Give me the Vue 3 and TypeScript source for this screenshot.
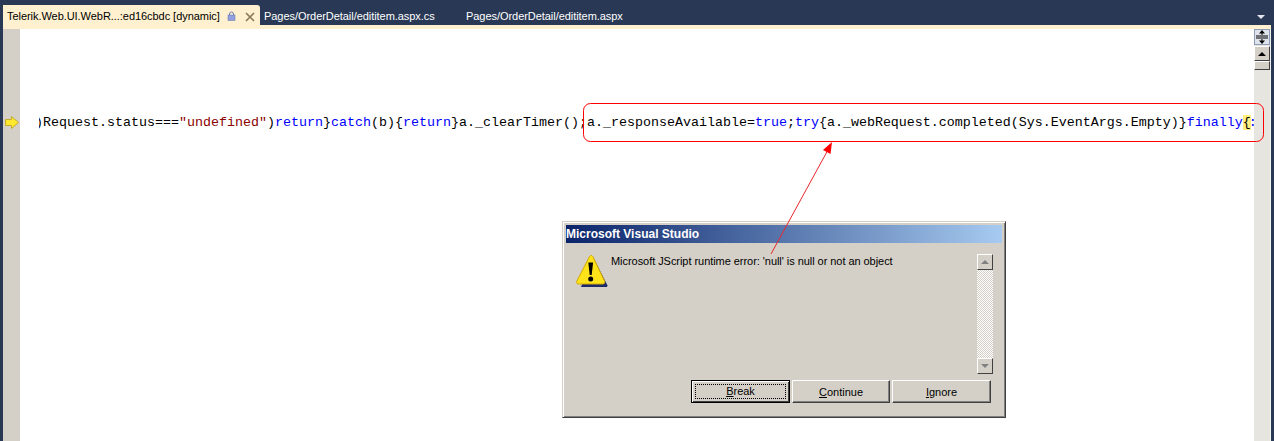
<script setup lang="ts">
interface Token { text: string; kind: 'plain' | 'kw' | 'str' | 'cur' | 'tail' }
const tokens: Token[] = [
  { text: ')Request.status===', kind: 'plain' },
  { text: '"undefined"', kind: 'str' },
  { text: ')', kind: 'plain' },
  { text: 'return', kind: 'kw' },
  { text: '}', kind: 'plain' },
  { text: 'catch', kind: 'kw' },
  { text: '(b){', kind: 'plain' },
  { text: 'return', kind: 'kw' },
  { text: '}a._clearTimer();a._responseAvailable=', kind: 'plain' },
  { text: 'true', kind: 'kw' },
  { text: ';', kind: 'plain' },
  { text: 'try', kind: 'kw' },
  { text: '{a._webRequest.completed(Sys.EventArgs.Empty)}', kind: 'plain' },
  { text: 'finally', kind: 'kw' },
  { text: '{', kind: 'cur' },
  { text: ':', kind: 'tail' },
]
</script>

<template>
  <div class="ide">
    <div class="tabs">
      <div class="tab active">
        <span class="tab-title">Telerik.Web.UI.WebR...:ed16cbdc [dynamic]</span>
        <svg class="lock" width="9" height="10" viewBox="0 0 9 10">
          <path d="M2.500 4.500V3a2 2 0 0 1 4 0v1.500" fill="none" stroke="#6f7fb5" stroke-width="1" />
          <rect x="1" y="4" width="7" height="5.500" fill="#8f9fe0" stroke="#6f7fb5" stroke-width=".6" />
        </svg>
        <svg class="close" width="10" height="10" viewBox="0 0 10 10">
          <path d="M1 1l8 8M9 1l-8 8" stroke="#8a7a5c" stroke-width="1.700" fill="none" />
        </svg>
      </div>
      <div class="tab second">Pages/OrderDetail/edititem.aspx.cs</div>
      <div class="tab third">Pages/OrderDetail/edititem.aspx</div>
      <svg class="menu" width="8" height="4" viewBox="0 0 8 4">
        <path d="M0 0h8L4 4z" fill="#e4e7ef" />
      </svg>
    </div>
    <div class="strip"></div>
    <div class="main">
      <div class="gutter">
        <svg class="pointer" width="14" height="13" viewBox="0 0 14 13">
          <path d="M.5 3.500H6.500V.5L13.500 6.500 6.500 12.500V9.500H.5z" fill="#ffe92e" stroke="#c4ac2a" stroke-width="1" />
        </svg>
      </div>
      <div class="editor">
        <div class="code"><span
          v-for="(t, i) in tokens"
          :key="i"
          :class="t.kind"
        >{{ t.text }}</span></div>
      </div>
      <div class="vscroll">
        <div class="split">
          <svg width="12" height="14" viewBox="0 0 12 14">
            <path d="M6 0l3 3.500H3zM6 14l3-3.500H3z" fill="#000" />
            <path d="M6 3v2M6 9v2M0 6h12M0 8h12" stroke="#000" stroke-width="1" fill="none" />
          </svg>
        </div>
        <div class="sbtn"><i class="up"></i></div>
        <div class="thumb"></div>
      </div>
    </div>

    <div class="dialog">
      <div class="title">Microsoft Visual Studio</div>
      <div class="dlg-body">
        <svg class="warn" width="32" height="33" viewBox="0 0 32 33">
          <path d="M17 2L31.500 30.500 31 32H5z" fill="#1c2a6a" />
          <path d="M13.500 1.500C14.500 .2 16 .2 16.800 1.500L28.500 26c.6 1.800 0 3-1.500 3H2.500C.8 29 .2 27.800 .8 26.200z" fill="#ffe31a" stroke="#d0a800" stroke-width="1" />
          <path d="M12.300 7.500h4.800l-1.400 12.500h-2z" fill="#000" />
          <circle cx="14.700" cy="24" r="2.500" fill="#000" />
        </svg>
        <div class="msg">Microsoft JScript runtime error: 'null' is null or not an object</div>
        <div class="dlg-scroll">
          <div class="dlg-sbtn"><i class="up grey"></i></div>
          <div class="track"></div>
          <div class="dlg-sbtn"><i class="down grey"></i></div>
        </div>
      </div>
      <div class="dlg-foot">
        <button class="btn default"><span class="focus"><u>B</u>reak</span></button>
        <button class="btn mid"><span><u>C</u>ontinue</span></button>
        <button class="btn"><span><u>I</u>gnore</span></button>
      </div>
    </div>

    <svg class="annot" width="1274" height="441" viewBox="0 0 1274 441">
      <rect x="583.500" y="103.500" width="680" height="38" rx="7" fill="none" stroke="#f00" stroke-width="1" />
      <path d="M771 254L829 148" stroke="#e8262a" stroke-width="1" fill="none" />
      <path d="M832 142l-1.500 12-7.500-4z" fill="#f00" />
    </svg>
  </div>
</template>

<style>
html, body { margin: 0; background: #fff; }
</style>

<style scoped>
.ide {
  position: relative;
  width: 1274px;
  height: 441px;
  overflow: hidden;
  background: #293955;
  display: flex;
  flex-direction: column;
  font-family: "Liberation Sans", Arial, sans-serif;
}
.tabs {
  height: 20px;
  margin-top: 5px;
  padding-left: 3px;
  display: flex;
  position: relative;
  flex: none;
}
.tab {
  font-size: 11px;
  line-height: 22px;
  letter-spacing: -0.05px;
  color: #fff;
  white-space: nowrap;
}
.tab.active {
  width: 257px;
  box-sizing: border-box;
  padding-left: 4px;
  background: #fff1cf;
  color: #000;
  border-top-right-radius: 3px;
  display: flex;
  align-items: flex-start;
}
.tab-title { width: 218px; }
.lock { margin: 6px 0 0 2px; }
.close { margin: 7px 0 0 9px; }
.second { margin-left: 4px; width: 202px; }
.menu { position: absolute; right: 9px; top: 10px; }
.strip {
  height: 4px;
  flex: none;
  margin: 0 3px 0 3px;
  background: #fff1cf;
}
.main {
  flex: 1;
  min-height: 0;
  display: flex;
  margin: 0 3px;
}
.gutter {
  width: 17px;
  flex: none;
  background: #d4d0c8;
  position: relative;
}
.pointer { position: absolute; left: 2px; top: 87px; }
.editor {
  flex: 1;
  min-width: 0;
  background: #fff;
  padding: 85px 0 0 19px;
  box-sizing: border-box;
  overflow: hidden;
}
.code {
  font-family: "Liberation Mono", "Courier New", monospace;
  font-size: 13.33px;
  line-height: 18px;
  height: 18px;
  white-space: pre;
  overflow: hidden;
  text-indent: -4px;
  color: #000;
}
.kw { color: #00f; }
.str { color: #8b0000; }
.cur { background: #ffee80; }
.tail { color: #00f; margin-left: -2px; }
.vscroll {
  width: 16px;
  flex: none;
  background: #e6e5e0;
  border-right: 1px solid #f4f3ef;
}
.split {
  height: 16px;
  box-sizing: border-box;
  border: 1px solid #8d9bb5;
  background: #dfe4ec;
  display: flex;
  align-items: center;
  justify-content: center;
}
.sbtn {
  height: 15px;
  margin-top: 1px;
  box-sizing: border-box;
  background: #d4d0c8;
  border: 1px solid;
  border-color: #fff #404040 #404040 #fff;
  display: flex;
  align-items: center;
  justify-content: center;
}
.thumb {
  height: 9px;
  box-sizing: border-box;
  background: #d4d0c8;
  border: 1px solid;
  border-color: #fff #404040 #404040 #fff;
}
.up, .down { display: block; width: 0; height: 0; border-left: 4px solid transparent; border-right: 4px solid transparent; }
.up { border-bottom: 4px solid #000; }
.up.grey { border-bottom-color: #808080; }
.down.grey { border-top: 4px solid #808080; }

.dialog {
  position: absolute;
  left: 562px;
  top: 221px;
  width: 444px;
  height: 197px;
  box-sizing: border-box;
  background: #d4d0c8;
  border: 1px solid;
  border-color: #d4d0c8 #404040 #404040 #d4d0c8;
  box-shadow: inset 1px 1px 0 #fff, inset -1px -1px 0 #808080;
  padding: 3px;
  display: flex;
  flex-direction: column;
}
.title {
  height: 18px;
  flex: none;
  background: linear-gradient(90deg, #0a246a, #a6caf0);
  color: #fff;
  font-weight: bold;
  font-size: 12px;
  line-height: 18px;
  white-space: nowrap;
}
.dlg-body {
  flex: 1;
  min-height: 0;
  display: flex;
  padding: 11px 9px 0 10px;
}
.warn { flex: none; margin-top: 1px; }
.msg {
  flex: 1;
  font-size: 11px;
  line-height: 14px;
  letter-spacing: -0.05px;
  margin-left: 3px;
  color: #000;
  white-space: nowrap;
}
.dlg-scroll {
  width: 16px;
  flex: none;
  display: flex;
  flex-direction: column;
  height: 120px;
}
.dlg-sbtn {
  height: 16px;
  flex: none;
  box-sizing: border-box;
  background: #d4d0c8;
  border: 1px solid;
  border-color: #fff #404040 #404040 #fff;
  display: flex;
  align-items: center;
  justify-content: center;
}
.track {
  flex: 1;
  background-color: #fff;
  background-image: repeating-conic-gradient(#d4d0c8 0 25%, #fff 0 50%);
  background-size: 2px 2px;
}
.dlg-foot {
  flex: none;
  display: flex;
  gap: 2px;
  padding: 0 0 11px 125px;
}
.btn {
  width: 99px;
  height: 23px;
  box-sizing: border-box;
  padding: 0;
  background: #d4d0c8;
  border: 1px solid;
  border-color: #fff #404040 #404040 #fff;
  box-shadow: inset -1px -1px 0 #808080;
  font-family: "Liberation Sans", Arial, sans-serif;
  font-size: 11px;
  color: #000;
  display: flex;
  align-items: center;
  justify-content: center;
}
.btn.mid { width: 98px; }
.btn.default {
  border-color: #000;
  box-shadow: inset 1px 1px 0 #fff, inset -1px -1px 0 #404040;
  padding: 3px;
}
.focus {
  flex: 1;
  align-self: stretch;
  border: 1px dotted #000;
  line-height: 13px;
}
.annot {
  position: absolute;
  left: 0;
  top: 0;
  pointer-events: none;
}
</style>
